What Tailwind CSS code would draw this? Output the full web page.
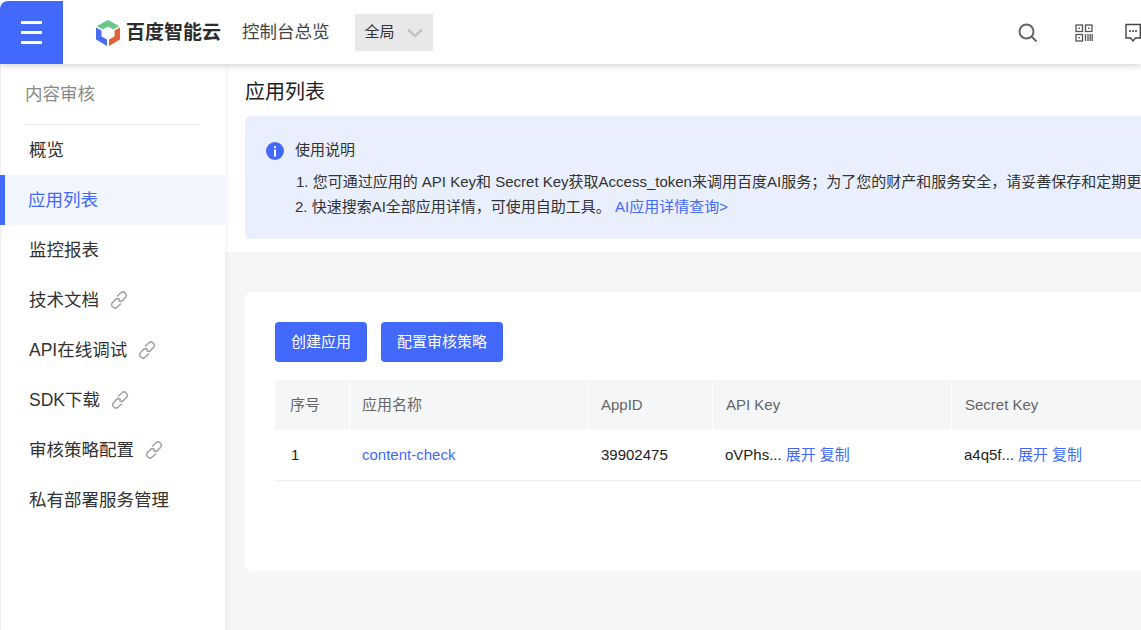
<!DOCTYPE html>
<html lang="zh-CN">
<head>
  <meta charset="UTF-8" />
  <meta name="viewport" content="width=device-width, initial-scale=1.0" />
  <title>应用列表 - 百度智能云</title>
  <script src="https://cdn.jsdelivr.net/npm/@tailwindcss/browser@4"></script>
</head>
<body class="w-[1141px] h-[630px] overflow-hidden bg-[#f5f6f8] text-[#333] font-['Liberation_Sans','Noto_Sans_CJK_SC',sans-serif]">
  <!-- top bar -->
  <header class="relative z-20 h-[65px] pt-px bg-white border-t border-[#eeeeee] shadow-[0_2px_6px_rgba(0,0,0,0.16)] flex items-center -mt-px">
    <button class="w-[63px] h-[63px] shrink-0 bg-[#4269fb] rounded-tl-lg flex flex-col items-center justify-center gap-[7px]">
      <span class="block w-[21px] h-[3px] bg-white"></span>
      <span class="block w-[21px] h-[3px] bg-white"></span>
      <span class="block w-[21px] h-[3px] bg-white"></span>
    </button>
    <svg class="ml-[32px] shrink-0" width="26" height="28" viewBox="0 0 26 28">
      <path d="M13 1 L24 7 L18.5 10.5 L13 7.5 L7.5 10.5 L2 7 Z" fill="#6cc788"/>
      <path d="M1 8.5 L6.5 11.5 L6.5 17.5 L12 20.5 L12 27 L1 20.5 Z" fill="#4a6cf0"/>
      <path d="M25 8.5 L25 20.5 L14 27 L14 20.5 L19.5 17.5 L19.5 11.5 Z" fill="#e0623a"/>
    </svg>
    <span class="ml-[5px] w-[95px] text-[19px] leading-[28px] font-bold text-[#2d2d2d] whitespace-nowrap">百度智能云</span>
    <span class="ml-[21px] text-[17.5px] text-[#444] whitespace-nowrap">控制台总览</span>
    <div class="ml-[25px] w-[78px] h-[37px] bg-[#e8e8e8] flex items-center pl-[10px]">
      <span class="text-[15px] text-[#333]">全局</span>
      <svg class="ml-[12px]" width="16" height="10" viewBox="0 0 16 10" fill="none" stroke="#c4c4c4" stroke-width="2.4"><path d="M1 1.5 L8 8 L15 1.5"/></svg>
    </div>
    <div class="ml-auto flex items-center w-[123px] shrink-0 overflow-hidden">
      <svg class="shrink-0" width="20" height="20" viewBox="0 0 20 20" fill="none" stroke="#666" stroke-width="2"><circle cx="8.5" cy="8.5" r="7"/><path d="M13.5 13.5 L18.5 18.5"/></svg>
      <svg class="shrink-0 ml-[37px]" width="18" height="18" viewBox="0 0 18 18" fill="none" stroke="#555" stroke-width="1.3"><rect x="1" y="1" width="6.5" height="6.5"/><rect x="10.5" y="1" width="6.5" height="6.5"/><rect x="1" y="10.5" width="6.5" height="6.5"/><rect x="3.5" y="3.5" width="1.5" height="1.5" fill="#555" stroke="none"/><rect x="13" y="3.5" width="1.5" height="1.5" fill="#555" stroke="none"/><rect x="3.5" y="13" width="1.5" height="1.5" fill="#555" stroke="none"/><path d="M10.5 10 V17 M13 10 V17 M15.2 10 V17 M17.2 10 V17"/></svg>
      <svg class="shrink-0 ml-[32px]" width="16" height="20" viewBox="0 0 16 20" fill="none" stroke="#444" stroke-width="1.4"><path d="M1 1.5 H15.3 V15 H10.5 L8 18 L5.5 15 H1 Z"/><path d="M4 8 H6 M7 8 H9 M10 8 H12" stroke-width="1.6"/></svg>
    </div>
  </header>

  <div class="flex h-[566px]">
    <!-- side nav -->
    <aside class="relative z-10 w-[225px] shrink-0 bg-white border-l border-[#eeeeee] shadow-[2px_0_6px_rgba(0,0,0,0.05)]">
      <div class="ml-[24px] mr-[25px] h-[61px] border-b border-[#e8eaee] pt-[17px] text-[17.5px] leading-[26px] text-[#8a8a8a]">内容审核</div>
      <nav class="text-[17.5px] text-[#333]">
        <a class="h-[50px] pl-[28px] flex items-center">概览</a>
        <a class="h-[50px] pl-[23px] flex items-center text-[#4269fb] bg-[#f2f7ff] border-l-[5px] border-[#4269fb] -ml-px">应用列表</a>
        <a class="h-[50px] pl-[28px] flex items-center">监控报表</a>
        <a class="h-[50px] pl-[28px] flex items-center gap-[11px]">技术文档
          <svg width="18" height="18" viewBox="0 0 18 18" fill="none" stroke="#a3a3a3" stroke-width="1.5" stroke-linecap="round"><path d="M7.5 5 L10.5 2.2 a3 3 0 0 1 4.9 4.4 L12.6 9.4 a3 3 0 0 1 -3.9 .3"/><path d="M10.5 13 L7.5 15.8 a3 3 0 0 1 -4.9 -4.4 L5.4 8.6 a3 3 0 0 1 3.9 -.3"/></svg>
        </a>
        <a class="h-[50px] pl-[28px] flex items-center gap-[11px]">API在线调试
          <svg width="18" height="18" viewBox="0 0 18 18" fill="none" stroke="#a3a3a3" stroke-width="1.5" stroke-linecap="round"><path d="M7.5 5 L10.5 2.2 a3 3 0 0 1 4.9 4.4 L12.6 9.4 a3 3 0 0 1 -3.9 .3"/><path d="M10.5 13 L7.5 15.8 a3 3 0 0 1 -4.9 -4.4 L5.4 8.6 a3 3 0 0 1 3.9 -.3"/></svg>
        </a>
        <a class="h-[50px] pl-[28px] flex items-center gap-[11px]">SDK下载
          <svg width="18" height="18" viewBox="0 0 18 18" fill="none" stroke="#a3a3a3" stroke-width="1.5" stroke-linecap="round"><path d="M7.5 5 L10.5 2.2 a3 3 0 0 1 4.9 4.4 L12.6 9.4 a3 3 0 0 1 -3.9 .3"/><path d="M10.5 13 L7.5 15.8 a3 3 0 0 1 -4.9 -4.4 L5.4 8.6 a3 3 0 0 1 3.9 -.3"/></svg>
        </a>
        <a class="h-[50px] pl-[28px] flex items-center gap-[11px]">审核策略配置
          <svg width="18" height="18" viewBox="0 0 18 18" fill="none" stroke="#a3a3a3" stroke-width="1.5" stroke-linecap="round"><path d="M7.5 5 L10.5 2.2 a3 3 0 0 1 4.9 4.4 L12.6 9.4 a3 3 0 0 1 -3.9 .3"/><path d="M10.5 13 L7.5 15.8 a3 3 0 0 1 -4.9 -4.4 L5.4 8.6 a3 3 0 0 1 3.9 -.3"/></svg>
        </a>
        <a class="h-[50px] pl-[28px] flex items-center">私有部署服务管理</a>
      </nav>
    </aside>

    <!-- main -->
    <main class="flex-1 min-w-0 overflow-hidden">
      <section class="h-[188px] bg-white px-[20px] pt-[13px]">
        <h1 class="text-[20px] leading-[30px] text-[#222] font-normal">应用列表</h1>
        <div class="mt-[9px] w-[1000px] h-[123px] bg-[#e9effd] rounded-[6px] px-[21px] pt-[23px] text-[15px] text-[#333]">
          <div class="flex items-center h-[22px]">
            <span class="w-[18px] h-[18px] rounded-full bg-[#4269fb] flex items-center justify-center mt-[2px]">
              <svg width="4" height="11" viewBox="0 0 4 11" fill="#fff"><rect x="1" y="0" width="2" height="2"/><rect x="1" y="3.5" width="2" height="7"/></svg>
            </span>
            <span class="ml-[11px]">使用说明</span>
          </div>
          <p class="mt-[8px] ml-[30px] h-[25px] leading-[25px] whitespace-nowrap">1. 您可通过应用的 API Key和 Secret Key获取Access_token来调用百度AI服务；为了您的财产和服务安全，请妥善保存和定期更换</p>
          <p class="ml-[29px] h-[25px] leading-[25px] whitespace-nowrap">2. 快速搜索AI全部应用详情，可使用自助工具。 <a class="text-[#4269fb]">AI应用详情查询&gt;</a></p>
        </div>
      </section>

      <section class="ml-[20px] mt-[40px] w-[1000px] h-[279px] bg-white rounded-[6px] px-[30px] pt-[30px]">
        <div class="flex gap-[14px]">
          <button class="h-[40px] w-[92px] rounded-[4px] bg-[#4269fb] text-white text-[15px]">创建应用</button>
          <button class="h-[40px] w-[122px] rounded-[4px] bg-[#4269fb] text-white text-[15px]">配置审核策略</button>
        </div>
        <div class="mt-[18px] w-[1000px] text-[15px]">
          <div class="flex h-[50px] gap-px text-[#666]">
            <div class="w-[74px] pl-[15px] bg-[#f5f6f8] rounded-tl-[4px] flex items-center">序号</div>
            <div class="w-[238px] pl-[12px] bg-[#f5f6f8] flex items-center">应用名称</div>
            <div class="w-[123px] pl-[12px] bg-[#f5f6f8] flex items-center">AppID</div>
            <div class="w-[238px] pl-[13px] bg-[#f5f6f8] flex items-center">API Key</div>
            <div class="w-[238px] pl-[13px] bg-[#f5f6f8] flex items-center">Secret Key</div>
          </div>
          <div class="flex h-[51px] gap-px border-b border-[#eeeeee] text-[#222]">
            <div class="w-[74px] pl-[16px] flex items-center">1</div>
            <div class="w-[238px] pl-[12px] flex items-center text-[#4269fb]">content-check</div>
            <div class="w-[123px] pl-[12px] flex items-center">39902475</div>
            <div class="w-[238px] pl-[12px] flex items-center whitespace-nowrap">oVPhs...<a class="ml-[4px] text-[#4269fb]">展开</a><a class="ml-[4px] text-[#4269fb]">复制</a></div>
            <div class="w-[238px] pl-[12px] flex items-center whitespace-nowrap">a4q5f...<a class="ml-[4px] text-[#4269fb]">展开</a><a class="ml-[4px] text-[#4269fb]">复制</a></div>
          </div>
        </div>
      </section>
    </main>
  </div>
</body>
</html>
